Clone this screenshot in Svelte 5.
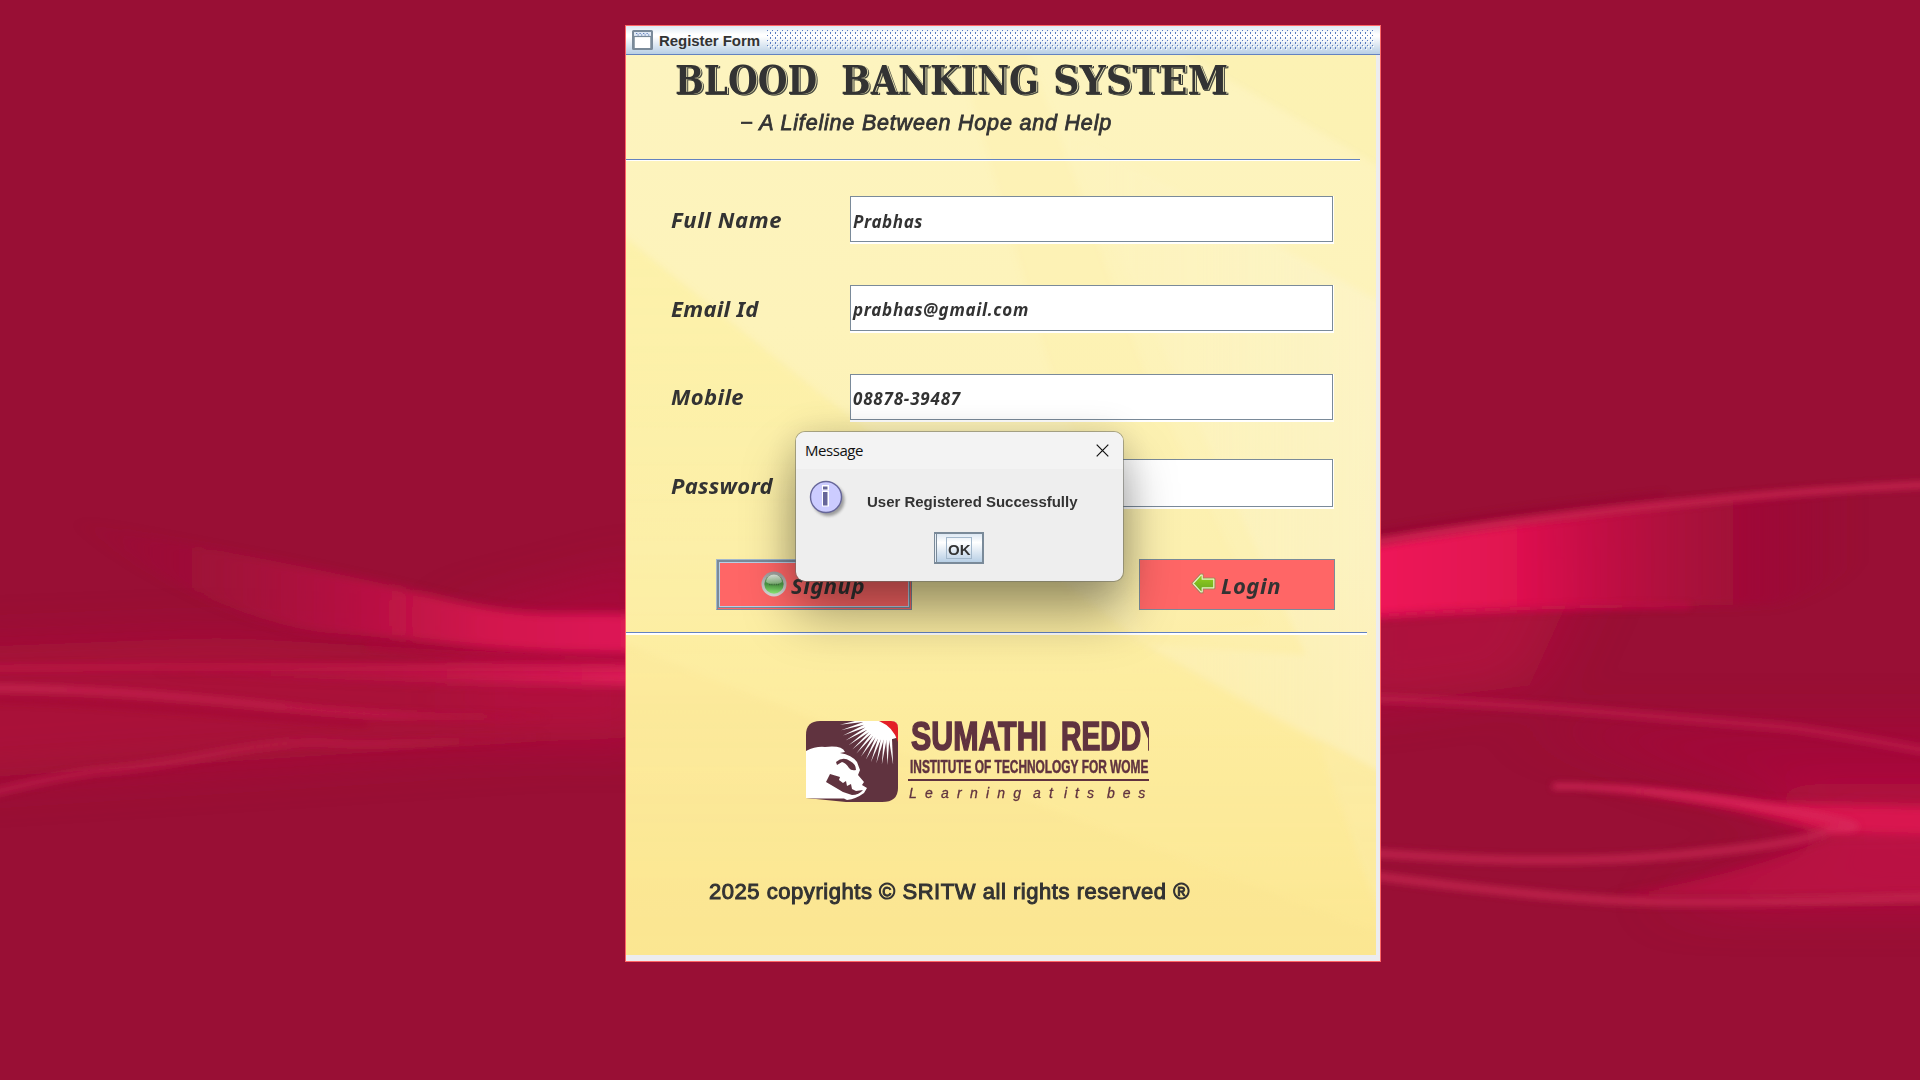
<script>
  const labels = [
    { text: 'Full Name', width: 111 },
    { text: 'Email Id', width: 87.5 },
    { text: 'Mobile', width: 73 },
    { text: 'Password', width: 102 },
  ];
  const fields = [
    { value: 'Prabhas', width: 70 },
    { value: 'prabhas@gmail.com', width: 176 },
    { value: '08878-39487', width: 108 },
    { value: '', width: 0 },
  ];
  const rays = Array.from({ length: 15 }, (_, i) => 84 + i * 6.6);

  // Spreads letter spacing so that a line of text takes the given width.
  function fit(node, width) {
    const count = node.textContent.length;
    if (!count || !width) return;
    const natural = node.getBoundingClientRect().width;
    node.style.letterSpacing = `${(width - natural) / count}px`;
  }
</script>

<div class="desktop">
  <svg class="wallpaper" viewBox="0 0 1568 882" preserveAspectRatio="none" aria-hidden="true">
    <defs>
      <filter id="b2" filterUnits="userSpaceOnUse" x="-60" y="300" width="1700" height="560"><feGaussianBlur stdDeviation="2.600" /></filter>
      <filter id="b5" filterUnits="userSpaceOnUse" x="-60" y="300" width="1700" height="560"><feGaussianBlur stdDeviation="6 4" /></filter>
      <filter id="b20" filterUnits="userSpaceOnUse" x="-100" y="250" width="1800" height="632"><feGaussianBlur stdDeviation="26 18" /></filter>
      <linearGradient id="lband" gradientUnits="userSpaceOnUse" x1="60" y1="0" x2="511" y2="0">
        <stop offset="0" stop-color="#a8123d" stop-opacity="0" />
        <stop offset=".2" stop-color="#aa123f" stop-opacity=".3" />
        <stop offset=".45" stop-color="#b81344" stop-opacity=".75" />
        <stop offset=".75" stop-color="#d3154e" />
        <stop offset="1" stop-color="#dd1a56" />
      </linearGradient>
      <linearGradient id="rband" gradientUnits="userSpaceOnUse" x1="1127" y1="0" x2="1520" y2="0">
        <stop offset="0" stop-color="#ee1459" />
        <stop offset=".28" stop-color="#e01250" />
        <stop offset=".52" stop-color="#c21045" stop-opacity=".8" />
        <stop offset=".75" stop-color="#a80d3b" stop-opacity=".5" />
        <stop offset="1" stop-color="#9b0e36" stop-opacity="0" />
      </linearGradient>
      <linearGradient id="fadeR" gradientUnits="userSpaceOnUse" x1="0" y1="0" x2="450" y2="0">
        <stop offset="0" stop-color="#c92653" />
        <stop offset=".7" stop-color="#bf1b4a" />
        <stop offset="1" stop-color="#b20f40" stop-opacity="0" />
      </linearGradient>
      <linearGradient id="fadeL" gradientUnits="userSpaceOnUse" x1="120" y1="0" x2="511" y2="0">
        <stop offset="0" stop-color="#b81546" stop-opacity="0" />
        <stop offset="1" stop-color="#dc1c57" />
      </linearGradient>
    </defs>
    <rect width="1568" height="882" fill="#990f35" />
    <g filter="url(#b20)">
      <path d="M-80 530L180 520L540 540V600L-80 640Z" fill="#b40b3e" opacity=".6" />
      <path d="M380 500L540 460V610L380 600Z" fill="#c00f46" opacity=".4" />
      <path d="M1090 480L1300 450L1250 560L1090 580Z" fill="#c00c42" opacity=".55" />
      <path d="M1420 640H1640V740H1360L1500 690Z" fill="#c40f47" opacity=".6" />
      <path d="M1250 590H1640V640H1400Z" fill="#ae0b3c" opacity=".5" />
    </g>
    <g filter="url(#b5)">
      <path d="M60 425C180 450 280 468 360 488S460 498 525 502V533C420 535 340 522 273 517S120 470 60 425Z" fill="url(#lband)" />
      <path d="M1095 449C1180 432 1300 418 1360 412S1500 398 1620 394V410C1540 420 1520 480 1448 494C1340 496 1220 496 1095 506Z" fill="url(#rband)" />
      <path d="M1300 643C1340 644 1400 650 1448 656L1640 660V684L1491 680C1440 662 1350 648 1300 643Z" fill="#d91750" />
      <path d="M1491 684H1640V732H1320Q1440 710 1491 684Z" fill="#be1046" opacity=".65" />
      <path d="M100 549Q400 541 540 541V560Q400 560 100 549Z" fill="url(#fadeL)" />
    </g>
    <g filter="url(#b2)" fill="none">
      <path d="M-40 546Q250 543 540 546" stroke="#c41a4b" stroke-width="6" opacity=".55" />
      <path d="M-40 562C90 560 200 575 273 581S380 584 450 586" stroke="url(#fadeR)" stroke-width="6" opacity=".8" />
      <path d="M-40 571C90 571 200 586 300 591" stroke="#a20534" stroke-width="5" opacity=".5" />
      <path d="M-40 656Q50 632 87 629T180 615T273 607T450 601" stroke="url(#fadeR)" stroke-width="7" opacity=".5" />
      <path d="M300 528Q400 541 540 539" stroke="#b20a3d" stroke-width="4" opacity=".6" />
      <path d="M1090 448C1200 430 1300 418 1360 412S1500 398 1620 394" stroke="#cf2554" stroke-width="6" opacity=".75" />
      <path d="M1090 440C1200 422 1300 410 1360 404" stroke="#950a31" stroke-width="4" opacity=".6" />
      <path d="M1090 505Q1250 494 1380 495" stroke="#d91c55" stroke-width="4" opacity=".4" />
      <path d="M1090 569Q1220 574 1314 582T1448 593T1620 622" stroke="#bd1e4b" stroke-width="7" opacity=".7" />
      <path d="M1268 642Q1340 642 1448 660T1491 677" stroke="#d82b5c" stroke-width="5" opacity=".8" />
      <path d="M1491 679Q1470 690 1360 699T1090 694" stroke="#c72653" stroke-width="7" opacity=".75" />
      <path d="M1090 711Q1230 730 1314 735T1620 731" stroke="#c42450" stroke-width="7" opacity=".8" />
    </g>
  </svg>

  <main class="window">
    <header class="titlebar">
      <svg class="frame-icon" width="21" height="20" viewBox="0 0 21 20">
        <rect x="1" y="1" width="19" height="18" rx=".5" fill="#fff" stroke="#7a8a99" stroke-width="2" />
        <path d="M2 2H19V6H2Z" fill="#dfe8f4" />
        <path d="M4 3.500H18M5.500 5H18" stroke="#6382bf" stroke-width="1" stroke-dasharray="1.300 2.200" />
        <path d="M2 6.500H19" stroke="#7a8a99" stroke-width="1.200" />
        <path d="M2 7V18M19 7V18" stroke="#7a8a99" stroke-width="1.500" />
      </svg>
      <span class="caption" use:fit={101}>Register Form</span>
      <svg class="bumps" width="607" height="20">
        <defs>
          <pattern id="bump" width="5" height="5" patternUnits="userSpaceOnUse">
            <path d="M1 1h1.300v1.300h-1.300zM3.500 3.500h1.300v1.300h-1.300z" fill="#fff" />
            <path d="M0 0h1v1h-1zM3 2h1v2h-1z" fill="#5b7cc0" />
          </pattern>
        </defs>
        <rect width="607" height="20" fill="url(#bump)" />
      </svg>
    </header>

    <div class="panel">
      <svg class="panel-art" viewBox="0 0 750 900" preserveAspectRatio="none" aria-hidden="true">
        <defs>
          <linearGradient id="paper" x1="0" y1="0" x2="0" y2="1">
            <stop offset="0" stop-color="#fdf4bf" />
            <stop offset=".3" stop-color="#fdf3ba" />
            <stop offset=".55" stop-color="#fcf1b4" />
            <stop offset=".7" stop-color="#fdeea8" />
            <stop offset="1" stop-color="#fce793" />
          </linearGradient>
          <linearGradient id="sheen" x1="0" y1="0" x2="1" y2="0">
            <stop offset="0" stop-color="#fcf6d8" stop-opacity="0" />
            <stop offset="1" stop-color="#fcf6d8" stop-opacity=".4" />
          </linearGradient>
          <linearGradient id="warm" gradientUnits="userSpaceOnUse" x1="0" y1="180" x2="0" y2="900">
            <stop offset="0" stop-color="#fcef96" stop-opacity=".45" />
            <stop offset="1" stop-color="#fce791" stop-opacity=".3" />
          </linearGradient>
          <filter id="soft"><feGaussianBlur stdDeviation="3" /></filter>
        </defs>
        <rect width="750" height="900" fill="url(#paper)" />
        <g filter="url(#soft)">
          <path d="M-10 175L190 335L520 590L760 725V910H-10Z" fill="url(#warm)" />
          <path d="M560 0L760 115V-10H540Z" fill="#faeea0" opacity=".35" />
          <path d="M330 -10H400L520 320L640 570L520 590L420 300Z" fill="#fcee98" opacity=".16" />
          <path d="M430 70L760 250V720L520 590L680 600L540 300Z" fill="url(#sheen)" />
          <path d="M-10 585Q250 690 760 880V910H-10Z" fill="#fbe28a" opacity=".2" />
          <path d="M510 590L760 725V880L690 680Z" fill="#fdf0b4" opacity=".3" />
        </g>
      </svg>

      <section class="heading">
        <svg class="headline" width="560" height="44" viewBox="0 0 560 44">
          <text x="0" y="36.500" textLength="142" lengthAdjust="spacingAndGlyphs">BLOOD</text>
          <text x="166" y="36.500" textLength="198" lengthAdjust="spacingAndGlyphs">BANKING</text>
          <text x="378" y="36.500" textLength="175" lengthAdjust="spacingAndGlyphs">SYSTEM</text>
        </svg>
        <p class="tagline"><span use:fit={372}>− A Lifeline Between Hope and Help</span></p>
      </section>
      <div class="rule upper"></div>

      <section class="form">
        <div class="labels">
          {#each labels as l}
            <div class="label"><span use:fit={l.width}>{l.text}</span></div>
          {/each}
        </div>
        <div class="fields">
          {#each fields as f, i}
            <div class="field" class:last={i === 3}>
              <div class="box"><span use:fit={f.width}>{f.value}</span></div>
            </div>
          {/each}
        </div>
      </section>

      <div class="actions">
        <div class="btn focused">
          <div class="inner">
            <svg width="26" height="26" viewBox="0 0 26 26">
              <defs>
                <linearGradient id="orb" x1="0" y1="0" x2="0" y2="1">
                  <stop offset="0" stop-color="#7d9a78" />
                  <stop offset=".5" stop-color="#4a9442" />
                  <stop offset="1" stop-color="#8ff078" />
                </linearGradient>
                <linearGradient id="ring" x1="0" y1="0" x2="0" y2="1">
                  <stop offset="0" stop-color="#9a9a9a" />
                  <stop offset="1" stop-color="#dcdcdc" />
                </linearGradient>
                <linearGradient id="gloss" x1="0" y1="0" x2="0" y2="1">
                  <stop offset="0" stop-color="#fff" stop-opacity=".8" />
                  <stop offset="1" stop-color="#cfe6c8" stop-opacity=".35" />
                </linearGradient>
              </defs>
              <circle cx="13" cy="13" r="12.500" fill="url(#ring)" />
              <circle cx="13" cy="13" r="9.700" fill="url(#orb)" />
              <path d="M5 11a8 7.500 0 0 1 16 0q-8 6-16 0z" fill="url(#gloss)" />
              <path d="M8 13.500h10" stroke="#3d6b3a" stroke-width="1.500" stroke-dasharray="1.500 .7" opacity=".8" />
            </svg>
            <span use:fit={74}>Signup</span>
          </div>
        </div>
        <div class="btn">
          <div class="inner login">
            <svg width="25" height="21" viewBox="0 0 25 21">
              <defs>
                <linearGradient id="leaf" x1="0" y1="0" x2="0" y2="1">
                  <stop offset="0" stop-color="#9ad41c" />
                  <stop offset="1" stop-color="#62a322" />
                </linearGradient>
              </defs>
              <path d="M1 10.500L9.500 1H12V5H23Q24 5 24 6V15Q24 16 23 16H12V20H9.500Z" fill="url(#leaf)" stroke="#b07c60" stroke-width="1.200" stroke-linejoin="round" />
              <path d="M2.200 10.500L9.900 2.200H11.200V6.200H22.800V14.800H11.200V18.800H9.900Z" fill="none" stroke="#e6f2c8" stroke-width="1.200" stroke-linejoin="round" />
            </svg>
            <span use:fit={60}>Login</span>
          </div>
        </div>
      </div>
      <div class="rule lower"></div>

      <footer class="foot">
        <svg class="college" width="343" height="86" viewBox="0 0 343 86">
          <defs>
            <clipPath id="tile"><path d="M14 1H85Q92 1 92 8V68Q92 82 76 82H40L0 78V15Q0 1 14 1Z" /></clipPath>
          </defs>
          <g clip-path="url(#tile)">
            <rect width="92" height="83" fill="#60333f" />
            <circle cx="80" cy="-4" r="24" fill="#fff" />
            {#each rays as a}
              <path d="M21 -1.700L49 0L21 1.700Z" fill="#fff" transform="translate(82 -4) rotate({a})" />
            {/each}
            <path d="M70 0H92V22Q87 5 70 0Z" fill="#e31f26" />
            <path d="M0 31Q10 26 19 27Q36 25 39 32L34 33Q46 35 51 42L54 50L52 55L58 62L56 65L61 68L58 73Q50 79 41 80L38 78.500H0Z" fill="#fff" />
            <path d="M30 42Q37 36 44 41Q50 44 50 50Q45 51 43 48Q40 43 36 42L31 45Z" fill="#60333f" />
            <path d="M24 54L29 55.500L34 57L33 60L37 63L40 61L41 66L45 64L46 69L50 71L57 70Q53 75 46 75L37 72L20 62Z" fill="#60333f" />
          </g>
          <g fill="#60333f">
            <text class="c1" x="105" y="29.500" textLength="136" lengthAdjust="spacingAndGlyphs">SUMATHI</text>
            <text class="c1" x="255" y="29.500" textLength="99" lengthAdjust="spacingAndGlyphs">REDDY</text>
            <text class="c2" x="104" y="52.500" textLength="247" lengthAdjust="spacingAndGlyphs">INSTITUTE OF TECHNOLOGY FOR WOMEN</text>
            <rect x="102" y="59" width="242" height="2" />
            <text class="c3" x="103" y="77.500" textLength="112" lengthAdjust="spacing">Learning</text>
            <text class="c3" x="227" y="77.500" textLength="20" lengthAdjust="spacing">at</text>
            <text class="c3" x="258" y="77.500" textLength="30" lengthAdjust="spacing">its</text>
            <text class="c3" x="301" y="77.500" textLength="50" lengthAdjust="spacing">best</text>
          </g>
        </svg>
        <p class="copy"><span use:fit={481}>2025 copyrights © SRITW all rights reserved ®</span></p>
      </footer>
    </div>
  </main>

  <div class="dialog" role="alertdialog" aria-label="Message">
    <div class="dialog-title">
      <span use:fit={58}>Message</span>
      <svg width="13" height="13" viewBox="0 0 13 13"><path d="M.7 .7L12.300 12.300M12.300 .7L.7 12.300" stroke="#111" stroke-width="1.200" /></svg>
    </div>
    <div class="dialog-body">
      <svg class="info" width="40" height="42" viewBox="0 0 40 42">
        <defs><filter id="drop"><feGaussianBlur stdDeviation="1.600" /></filter></defs>
        <circle cx="19.500" cy="20" r="16" fill="#666" opacity=".6" filter="url(#drop)" />
        <circle cx="17" cy="17" r="15.500" fill="#ccccff" stroke="#666699" stroke-width="1.400" />
        <path d="M13 5h7v5.500h-7zM13 11h7v15.500h-7z" fill="#fff" />
        <path d="M14 6.500h4.500v3h-4.500zM14 12h4.500v13.500h-4.500z" fill="#666699" />
      </svg>
      <span class="message" use:fit={210.5}>User Registered Successfully</span>
    </div>
    <div class="ok"><span>OK</span></div>
  </div>
</div>

<style>
  :global(body) {
    margin: 0;
    overflow: hidden;
  }
  .desktop {
    position: relative;
    box-sizing: border-box;
    width: 1920px;
    height: 1080px;
    padding: 25px 0 0 625px;
    background: #990f35;
    color: #333;
    overflow: hidden;
    white-space: nowrap;
  }
  p {
    margin: 0;
  }
  svg {
    display: block;
    flex: none;
  }
  .wallpaper {
    position: absolute;
    inset: 0;
    width: 1920px;
    height: 1080px;
  }
  .window {
    position: relative;
    box-sizing: border-box;
    width: 756px;
    height: 937px;
    border: 1px solid #ff6666;
    background: #ececee;
    display: flex;
    flex-direction: column;
  }
  .titlebar {
    box-sizing: border-box;
    height: 29px;
    flex: none;
    padding-left: 6px;
    display: flex;
    align-items: flex-start;
    border-bottom: 1px solid #6382bf;
    background: linear-gradient(#dde8f3 0, #fff 30%, #fff 38%, #b8cfe5 100%);
  }
  .frame-icon {
    margin-top: 4px;
  }
  .caption {
    margin: 6px 0 0 6px;
    font: bold 15px/17px 'Liberation Sans', Arial, sans-serif;
  }
  .bumps {
    margin: 4px 6px 0 auto;
  }
  .panel {
    position: relative;
    width: 750px;
    height: 900px;
    display: flex;
    flex-direction: column;
  }
  .panel-art {
    position: absolute;
    inset: 0;
    width: 750px;
    height: 900px;
  }
  .heading,
  .rule,
  .form,
  .actions,
  .foot {
    position: relative;
    flex: none;
  }
  .heading {
    height: 104px;
  }
  .headline {
    margin: 2px 0 0 49px;
    fill: #333;
    font: bold 39px 'DejaVu Serif', serif;
    filter: drop-shadow(1px 0.5px 0 #e2dcae) drop-shadow(1px 1px 0 #4a4c42);
    overflow: visible;
  }
  .tagline {
    margin: 7px 0 0 114px;
    font: italic 400 21.500px/31px 'Liberation Sans', sans-serif;
    -webkit-text-stroke: 0.8px #333;
  }
  .rule {
    height: 1px;
    background: #6382bf;
    border-bottom: 1px solid #fff;
  }
  .rule.upper {
    width: 734px;
  }
  .rule.lower {
    width: 741px;
    border-bottom-width: 2px;
    margin-top: 22px;
  }
  .form {
    height: 398px;
    display: flex;
  }
  .labels {
    width: 179px;
    padding: 43px 0 0 45px;
    font: italic bold 22px/30px 'Noto Sans', 'Open Sans', sans-serif;
  }
  .label {
    height: 88.600px;
  }
  .fields {
    width: 484px;
    padding-top: 35px;
    font: italic bold 17px/24px 'Noto Sans', 'Open Sans', sans-serif;
  }
  .field {
    box-sizing: border-box;
    height: 48px;
    margin-bottom: 41px;
    padding: 0 1px 2px 0;
    background: #fff;
  }
  .field:nth-child(3) {
    margin-bottom: 37px;
  }
  .field.last {
    height: 50px;
    margin-bottom: 0;
  }
  .box {
    box-sizing: border-box;
    height: 100%;
    padding: 12px 0 0 2px;
    border: 1px solid #7a8a99;
    background: #fff;
  }
  .field:first-child .box {
    padding-top: 13px;
  }
  .actions {
    display: flex;
    justify-content: space-between;
    width: 619px;
    margin-left: 90px;
  }
  .btn {
    box-sizing: border-box;
    width: 196px;
    height: 51px;
    border: 1px solid #7a8a99;
    background: #ff6666;
    font: italic bold 22px/30px 'Noto Sans', 'Open Sans', sans-serif;
  }
  .btn.focused {
    border-left-color: #a3b8cc;
    border-top-color: #a3b8cc;
    box-shadow: inset 1px 1px #7a8a99;
    padding: 1px;
  }
  .inner {
    box-sizing: border-box;
    height: 100%;
    display: flex;
    align-items: flex-start;
  }
  .focused .inner {
    border: 1px solid #7a8a99;
    box-shadow: inset 0 0 0 1px #b8cfe5;
    padding: 9px 0 0 42px;
    gap: 4px;
  }
  .focused span {
    margin-top: -1px;
  }
  .login {
    padding: 10px 0 0 51px;
    gap: 5px;
  }
  .inner.login svg {
    margin-top: 3px;
  }
  .foot {
    height: 320px;
  }
  .college {
    margin: 85px 0 0 180px;
    overflow: hidden;
  }
  .c1 {
    font: bold 40px 'Liberation Sans', sans-serif;
    stroke: #60333f;
    stroke-width: 1.6px;
  }
  .c2 {
    font: bold 17.500px 'Liberation Sans', sans-serif;
    stroke: #60333f;
    stroke-width: 0.5px;
  }
  .c3 {
    font: italic 14px 'Liberation Sans', sans-serif;
    stroke: #60333f;
    stroke-width: 0.3px;
  }
  .copy {
    margin: 70px 0 0 83px;
    font: 400 22px/32px 'Liberation Sans', sans-serif;
    -webkit-text-stroke: 1px #333;
  }
  .dialog {
    position: absolute;
    box-sizing: border-box;
    left: 795px;
    top: 431px;
    width: 329px;
    height: 151px;
    border: 1px solid rgba(110, 110, 100, 0.55);
    border-radius: 10px;
    background: #eeeeee;
    background-clip: padding-box;
    box-shadow: 0 32px 52px rgba(0, 0, 0, 0.36), 0 2px 36px rgba(0, 0, 0, 0.14);
    overflow: hidden;
  }
  .dialog-title {
    box-sizing: border-box;
    height: 37px;
    padding: 0 14px 2px 9px;
    display: flex;
    align-items: center;
    justify-content: space-between;
    background: #f3f3f3;
    color: #111;
    font: 15px/20px 'Open Sans', 'Noto Sans', sans-serif;
  }
  .dialog-title svg {
    margin-top: 2px;
  }
  .dialog-body {
    display: flex;
    height: 63px;
    padding-left: 13px;
  }
  .info {
    margin-top: 11px;
  }
  .message {
    margin: 24px 0 0 18px;
    font: bold 15px/17px 'Liberation Sans', Arial, sans-serif;
    height: 17px;
  }
  .ok {
    box-sizing: border-box;
    width: 50px;
    height: 32px;
    margin-left: 138px;
    padding: 3px 0 0 11px;
    border: 2px solid #7a8a99;
    border-left-width: 1px;
    box-shadow: inset 1px 0 #e8eef5, inset 2px 0 #7a8a99;
    background: linear-gradient(#dde8f3, #fff 30%, #b8cfe5);
    font: bold 15px/23px 'Liberation Sans', Arial, sans-serif;
  }
  .ok span {
    box-sizing: border-box;
    display: block;
    width: 26px;
    height: 22px;
    border: 1px solid #a3b8cc;
    padding-left: 1px;
  }
</style>
